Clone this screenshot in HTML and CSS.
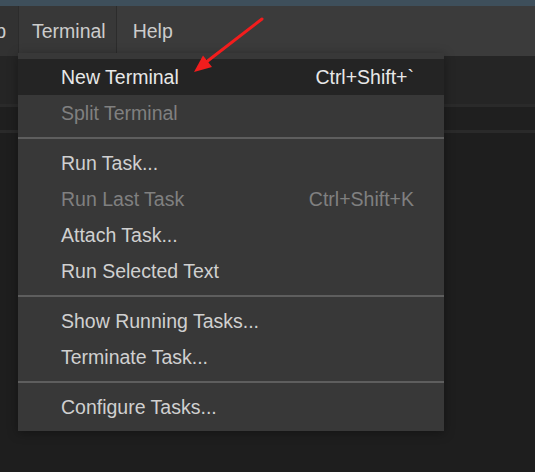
FILE: index.html
```html
<!DOCTYPE html>
<html>
<head>
<meta charset="utf-8">
<link rel="stylesheet" href="styles.css">
</head>
<body>
<div class="titlestrip"></div>
<header class="menubar">
  <div class="mb-item clipped">p</div>
  <div class="mb-item open">Terminal</div>
  <div class="mb-item">Help</div>
</header>
<div class="tabbar"></div>
<div class="band"></div>
<div class="subrow"></div>
<div class="band"></div>
<main class="editor"></main>

<div class="menu">
  <div class="mi active"><span>New Terminal</span><span class="key">Ctrl+Shift+`</span></div>
  <div class="mi disabled"><span>Split Terminal</span></div>
  <div class="sep"></div>
  <div class="mi"><span>Run Task...</span></div>
  <div class="mi disabled"><span>Run Last Task</span><span class="key">Ctrl+Shift+K</span></div>
  <div class="mi"><span>Attach Task...</span></div>
  <div class="mi"><span>Run Selected Text</span></div>
  <div class="sep"></div>
  <div class="mi"><span>Show Running Tasks...</span></div>
  <div class="mi"><span>Terminate Task...</span></div>
  <div class="sep"></div>
  <div class="mi"><span>Configure Tasks...</span></div>
</div>

<svg class="arrow" width="535" height="472" viewBox="0 0 535 472">
  <line x1="262" y1="19" x2="205" y2="63" stroke="#f21d1d" stroke-width="3" stroke-linecap="round"/>
  <polygon points="194,72 203,55.5 212,67" fill="#f21d1d"/>
</svg>
</body>
</html>
```
FILE: styles.css
```css
html, body {
  margin: 0;
  padding: 0;
  height: 100%;
}
body {
  background: #1e1e1e;
  font-family: "Liberation Sans", Arial, sans-serif;
  display: flex;
  flex-direction: column;
  overflow: hidden;
  position: relative;
}
.titlestrip {
  height: 6px;
  background: #3e4f5b;
  flex: none;
}
.menubar {
  height: 50px;
  flex: none;
  display: flex;
  background: #3b3b3b;
  color: #cccccc;
  font-size: 19.5px;
}
.mb-item {
  display: flex;
  align-items: center;
  padding: 0 16px;
}
.mb-item.clipped {
  width: 18px;
  box-sizing: border-box;
  padding: 0 12px 0 0;
  justify-content: flex-end;
  overflow: hidden;
  background: #323232;
}
.mb-item.open {
  background: #383838;
  border-left: 1px solid #2c2c2c;
  border-right: 1px solid #2c2c2c;
  padding: 0 10px 0 13px;
}
.tabbar {
  height: 48px;
  flex: none;
  background: #252525;
}
.band {
  height: 3px;
  flex: none;
  background: #2a2a2a;
}
.subrow {
  height: 23px;
  flex: none;
  background: #1f1f1f;
}
.editor {
  flex: 1;
  background: #1e1e1e;
}
.menu {
  position: absolute;
  left: 18px;
  top: 53px;
  width: 426px;
  background: #383838;
  padding: 6px 0;
  box-shadow: 0 2px 10px rgba(0, 0, 0, 0.35);
  font-size: 19.5px;
  color: #d0d0d0;
}
.mi {
  height: 36px;
  display: flex;
  align-items: center;
  justify-content: space-between;
  padding: 0 30px 0 43px;
}
.mi.active {
  background: #242424;
  color: #e8e8e8;
}
.mi.disabled {
  color: #808080;
}
.sep {
  height: 2px;
  margin: 6px 0;
  background: #5e5e5e;
}
.arrow {
  position: absolute;
  left: 0;
  top: 0;
  pointer-events: none;
}
```
